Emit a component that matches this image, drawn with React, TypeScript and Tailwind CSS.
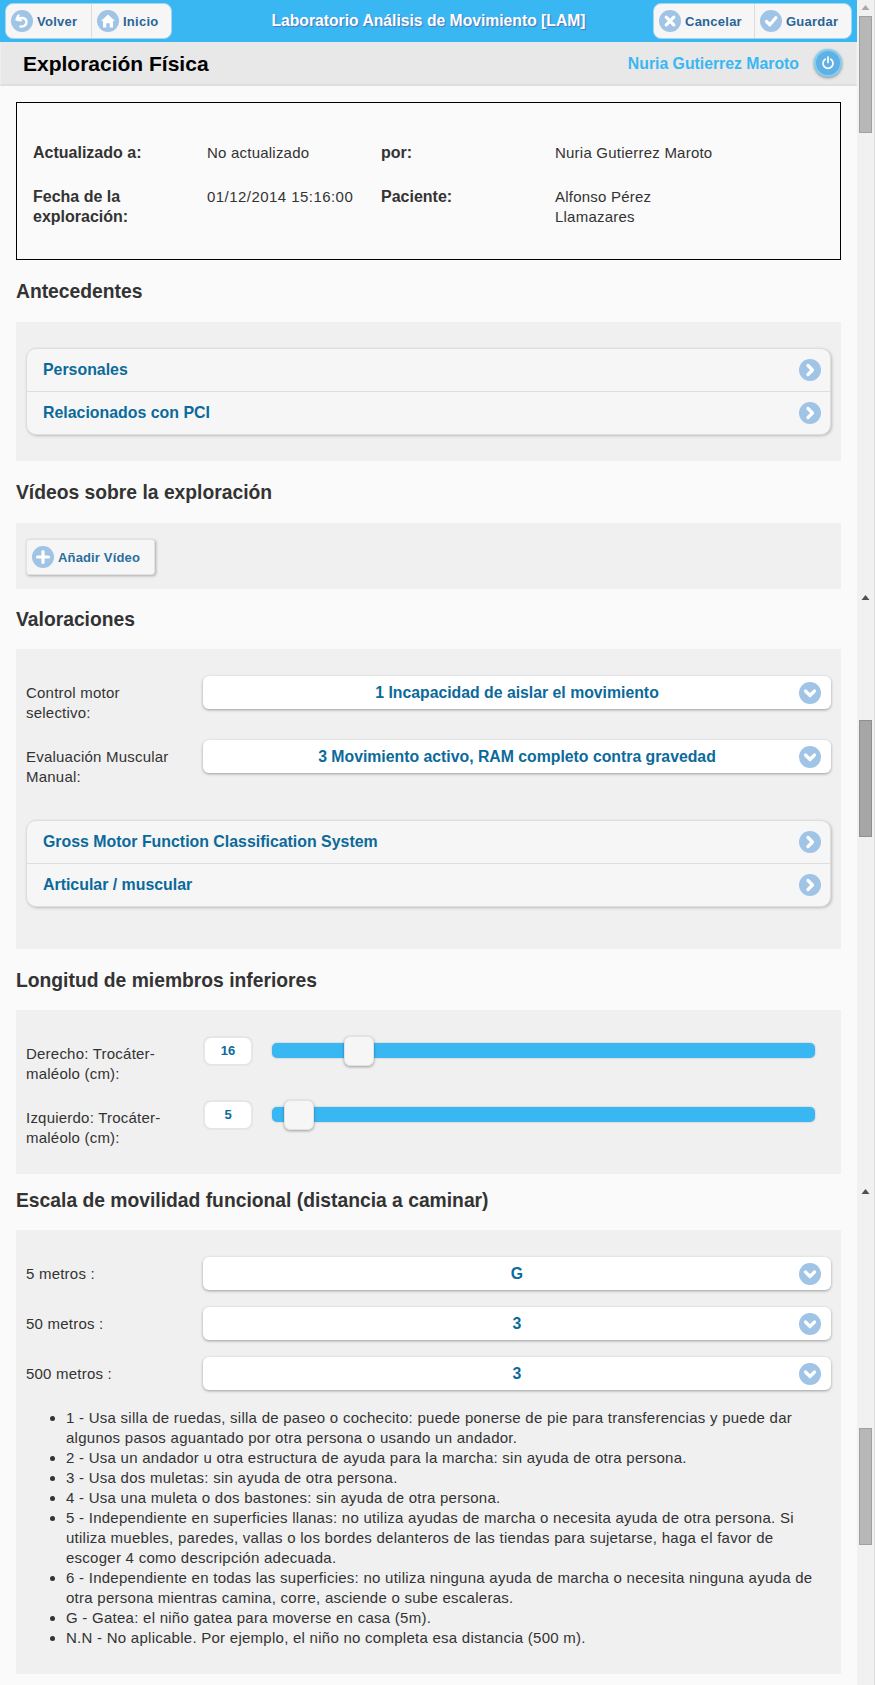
import React from "react";

function Icon({ d, stroke = 3.2, size = 22, fill }: { d: string; stroke?: number; size?: number; fill?: boolean }) {
  return (
    <svg width={size} height={size} viewBox="0 0 22 22" className="shrink-0 block">
      <circle cx="11" cy="11" r="11" fill="#a0c4e6" />
      <path d={d} fill={fill ? "#fff" : "none"} stroke={fill ? "none" : "#fff"} strokeWidth={stroke} strokeLinecap="round" strokeLinejoin="round" />
    </svg>
  );
}

const P = {
  back: "M7.5 5.5 L5.5 9.5 L9.8 10.2 M6 9.5 C9 6.8 15.5 7.5 15.5 12 C15.5 15.5 12 17 9.5 16.5",
  home: "M11 4.5 L18 11 L16 11 L16 17.5 L12.7 17.5 L12.7 13.3 L9.3 13.3 L9.3 17.5 L6 17.5 L6 11 L4 11 Z",
  x: "M7.2 7.2 L14.8 14.8 M14.8 7.2 L7.2 14.8",
  check: "M6.5 11.5 L9.8 14.8 L15.8 7.8",
  plus: "M11 5.5 L11 16.5 M5.5 11 L16.5 11",
  right: "M9 6.5 L13.5 11 L9 15.5",
  down: "M6.5 9 L11 13.5 L15.5 9",
};

function TopButton({ icon, label, fill, stroke, gap = "ml-[4px]", w }: { icon: string; label: string; fill?: boolean; stroke?: number; gap?: string; w: string }) {
  return (
    <div className={`flex items-center pl-[5px] h-full ${w}`}>
      <Icon d={icon} fill={fill} stroke={stroke} />
      <span className={`${gap} pt-[1px] text-[13px] font-bold tracking-[0.25px] text-[#2a6496]`}>{label}</span>
    </div>
  );
}

function Heading({ children, h }: { children: React.ReactNode; h: string }) {
  return <h2 className={`flex items-center text-[19.3px] font-bold text-[#333] ${h}`}>{children}</h2>;
}

function Accordion({ rows }: { rows: string[] }) {
  return (
    <div className="rounded-[10px] border border-[#dedede] bg-[#f6f6f6] shadow-[1px_1px_3px_rgba(0,0,0,0.22)]">
      {rows.map((r, i) => (
        <div key={r} className={`flex items-center justify-between pl-[16px] pr-[9px] ${i > 0 ? "h-[43px] border-t border-[#dedede]" : "h-[42px]"}`}>
          <span className="text-[15.9px] font-bold text-[#0b6a9b]">{r}</span>
          <Icon d={P.right} />
        </div>
      ))}
    </div>
  );
}

function Select({ value }: { value: string }) {
  return (
    <div className="relative flex h-[33px] w-[628px] items-center justify-center rounded-[6px] bg-white shadow-[0_1px_3px_rgba(0,0,0,0.35)]">
      <span className="text-[15.8px] font-bold text-[#0b6a9b]">{value}</span>
      <div className="absolute right-[10px] top-[6px]">
        <Icon d={P.down} />
      </div>
    </div>
  );
}

function SliderRow({ label1, label2, value, left }: { label1: string; label2: string; value: string; left: string }) {
  return (
    <div className="flex h-[64px]">
      <div className="w-[177px] pt-[8px] leading-[20px]">
        {label1}
        <br />
        {label2}
      </div>
      <div className="flex h-[30px] w-[50px] items-center justify-center rounded-[8px] border-2 border-[#e6e6e6] bg-white text-[13px] font-bold tracking-normal text-[#0b6a9b]">
        {value}
      </div>
      <div className="relative ml-[19px] mt-[7px] h-[15px] w-[543px] rounded-[5px] bg-[#39b7f3] shadow-[0_0_2px_rgba(0,0,0,0.25)]">
        <div className={`absolute top-[-7px] h-[30px] w-[30px] rounded-[6px] border border-[#e2e2e2] bg-[#f6f6f6] shadow-[0_1px_3px_rgba(0,0,0,0.35)] ${left}`} />
      </div>
    </div>
  );
}

function Thumb({ mt, dark }: { mt: string; dark?: boolean }) {
  return <div className={`${mt} ml-[2px] h-[117px] w-[13px] border ${dark ? "border-[#8f8f8f] bg-[#a6a6a6]" : "border-[#a0a0a0] bg-[#b7b7b7]"}`} />;
}

function Arrow({ mt, dark }: { mt: string; dark?: boolean }) {
  return (
    <svg width="17" height="5" viewBox="0 0 17 5" className={`${mt} block shrink-0`}>
      <path d="M8.5 0 L12.5 5 L4.5 5 Z" fill={dark ? "#505050" : "#a8a8a8"} />
    </svg>
  );
}

const notes = [
  "1 - Usa silla de ruedas, silla de paseo o cochecito: puede ponerse de pie para transferencias y puede dar algunos pasos aguantado por otra persona o usando un andador.",
  "2 - Usa un andador u otra estructura de ayuda para la marcha: sin ayuda de otra persona.",
  "3 - Usa dos muletas: sin ayuda de otra persona.",
  "4 - Usa una muleta o dos bastones: sin ayuda de otra persona.",
  "5 - Independiente en superficies llanas: no utiliza ayudas de marcha o necesita ayuda de otra persona. Si utiliza muebles, paredes, vallas o los bordes delanteros de las tiendas para sujetarse, haga el favor de escoger 4 como descripción adecuada.",
  "6 - Independiente en todas las superficies: no utiliza ninguna ayuda de marcha o necesita ninguna ayuda de otra persona mientras camina, corre, asciende o sube escaleras.",
  "G - Gatea: el niño gatea para moverse en casa (5m).",
  "N.N - No aplicable. Por ejemplo, el niño no completa esa distancia (500 m).",
];

export default function App() {
  return (
    <div className="flex h-[1685px] w-[875px] overflow-hidden bg-[#fafafa] font-['Liberation_Sans',Arial,sans-serif] text-[15px] tracking-[0.22px] text-[#333]">
      <div className="w-[857px] shrink-0">
        <header className="flex h-[42px] items-center justify-between bg-[#39b7f3] pl-[5px] pr-[5px] tracking-normal">
          <div className="flex h-[36px] w-[167px] rounded-[8px] border border-[#a4d4ee] bg-[#f6f6f6]">
            <TopButton icon={P.back} label="Volver" stroke={2.4} w="w-[86px] border-r border-[#dcdcdc]" />
            <TopButton icon={P.home} label="Inicio" fill w="flex-1" />
          </div>
          <div className="ml-[32px] text-[15.7px] font-bold text-white [text-shadow:1px_1px_1px_rgba(90,60,140,0.55)]">Laboratorio Análisis de Movimiento [LAM]</div>
          <div className="flex h-[36px] w-[199px] rounded-[8px] border border-[#a4d4ee] bg-[#f6f6f6]">
            <TopButton icon={P.x} label="Cancelar" w="w-[101px] border-r border-[#dcdcdc]" />
            <TopButton icon={P.check} label="Guardar" w="flex-1" />
          </div>
        </header>
        <div className="flex h-[44px] items-center justify-between border-x border-b-2 border-x-[#eeeeee] border-b-[#dedede] bg-[#e8e8e8] pl-[22px] pr-[14px] tracking-normal">
          <h1 className="pt-[1px] text-[21px] font-bold text-black">Exploración Física</h1>
          <div className="flex items-center">
            <span className="pt-[1px] text-[15.8px] font-bold text-[#39b7f3]">Nuria Gutierrez Maroto</span>
            <div className="ml-[15px] flex h-[28px] w-[28px] items-center justify-center rounded-full border-2 border-[#7fd0f4] bg-[#5fb0e4] shadow-[0_1px_3px_rgba(0,0,0,0.4)]">
              <svg width="14" height="14" viewBox="0 0 14 14">
                <path d="M4.2 3.2 A5 5 0 1 0 9.8 3.2 M7 1 L7 6.5" fill="none" stroke="#fff" strokeWidth="1.7" strokeLinecap="round" />
              </svg>
            </div>
          </div>
        </div>

        <main className="px-[16px] pt-[16px]">
          <section className="grid h-[158px] grid-cols-[174px_174px_174px_1fr] content-start gap-y-[24px] border border-black pl-[16px] pt-[40px] leading-[20px]">
            <div className="text-[16px] font-bold tracking-normal">Actualizado a:</div>
            <div>No actualizado</div>
            <div className="text-[16px] font-bold tracking-normal">por:</div>
            <div>Nuria Gutierrez Maroto</div>
            <div className="text-[16px] font-bold tracking-normal">
              Fecha de la
              <br />
              exploración:
            </div>
            <div className="tracking-[0.45px]">01/12/2014 15:16:00</div>
            <div className="text-[16px] font-bold tracking-normal">Paciente:</div>
            <div>
              Alfonso Pérez
              <br />
              Llamazares
            </div>
          </section>

          <Heading h="h-[62px] pt-[2px] tracking-normal">Antecedentes</Heading>
          <section className="bg-[#f0f0f0] px-[10px] py-[26px] tracking-normal">
            <Accordion rows={["Personales", "Relacionados con PCI"]} />
          </section>

          <Heading h="h-[62px] pt-[2px] tracking-normal">Vídeos sobre la exploración</Heading>
          <section className="h-[66px] bg-[#f0f0f0] px-[10px] pt-[16px]">
            <div className="flex h-[36px] w-[129px] items-center rounded-[3px] border border-[#e2e2e2] bg-[#f6f6f6] pl-[5px] shadow-[1px_1px_3px_rgba(0,0,0,0.3)]">
              <Icon d={P.plus} />
              <span className="ml-[4px] pt-[1px] text-[13px] font-bold tracking-[0.15px] text-[#2a6f9e]">Añadir Vídeo</span>
            </div>
          </section>

          <Heading h="h-[60px] pt-[2px] tracking-normal">Valoraciones</Heading>
          <section className="bg-[#f0f0f0] px-[10px] pb-[42px] pt-[27px]">
            <div className="flex h-[64px]">
              <div className="w-[177px] pt-[7px] leading-[20px]">
                Control motor
                <br />
                selectivo:
              </div>
              <div className="tracking-normal">
                <Select value="1 Incapacidad de aislar el movimiento" />
              </div>
            </div>
            <div className="flex h-[64px]">
              <div className="w-[177px] pt-[7px] leading-[20px]">
                Evaluación Muscular
                <br />
                Manual:
              </div>
              <div className="tracking-normal">
                <Select value="3 Movimiento activo, RAM completo contra gravedad" />
              </div>
            </div>
            <div className="mt-[16px] tracking-normal">
              <Accordion rows={["Gross Motor Function Classification System", "Articular / muscular"]} />
            </div>
          </section>

          <Heading h="h-[61px] pt-[3px] tracking-normal">Longitud de miembros inferiores</Heading>
          <section className="bg-[#f0f0f0] px-[10px] pb-[10px] pt-[26px]">
            <SliderRow label1="Derecho: Trocáter-" label2="maléolo (cm):" value="16" left="left-[72px]" />
            <SliderRow label1="Izquierdo: Trocáter-" label2="maléolo (cm):" value="5" left="left-[12px]" />
          </section>

          <Heading h="h-[56px] pb-[2px] tracking-normal">Escala de movilidad funcional (distancia a caminar)</Heading>
          <section className="h-[444px] bg-[#f0f0f0] px-[10px] pt-[27px]">
            {[
              ["5 metros :", "G"],
              ["50 metros :", "3"],
              ["500 metros :", "3"],
            ].map(([l, v], i) => (
              <div key={l} className={`flex h-[33px] items-center ${i > 0 ? "mt-[17px]" : ""}`}>
                <div className="w-[177px] pt-[1px]">{l}</div>
                <div className="tracking-normal">
                  <Select value={v} />
                </div>
              </div>
            ))}
            <ul className="mt-[18px] list-disc pl-[40px] pr-[3px] leading-[20px] tracking-[0.26px]">
              {notes.map((n) => (
                <li key={n}>{n}</li>
              ))}
            </ul>
          </section>
        </main>
      </div>

      <aside className="flex h-full w-[18px] flex-col border-r border-[#dcdcdc] bg-[#f1f1f1] pt-[5px]">
        <Arrow mt="" />
        <Thumb mt="mt-[6px]" />
        <Arrow mt="mt-[462px]" dark />
        <Thumb mt="mt-[120px]" dark />
        <Arrow mt="mt-[352px]" dark />
        <Thumb mt="mt-[234px]" />
      </aside>
    </div>
  );
}
